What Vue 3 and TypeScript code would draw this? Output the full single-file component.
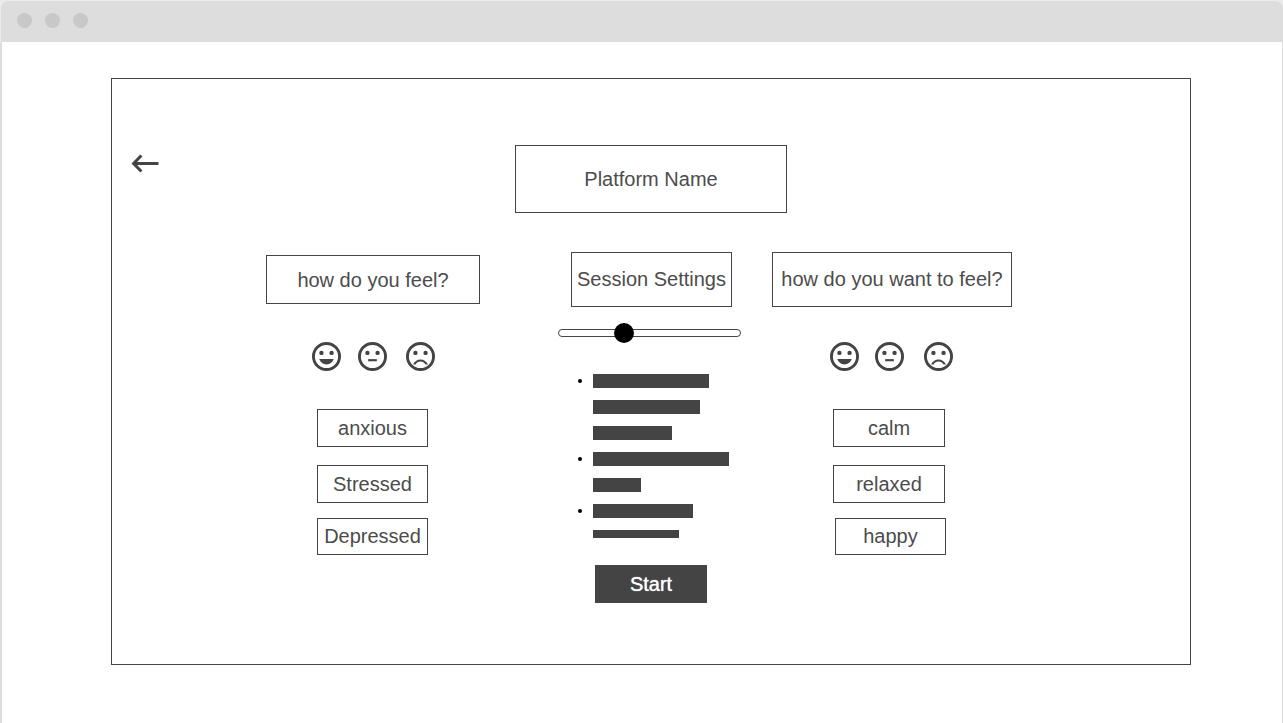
<script setup lang="ts">
import { ref } from 'vue'

type Mood = 'happy' | 'neutral' | 'sad'

interface FeelingGroup {
  id: string
  title: string
  feelings: string[]
}

const moods: Mood[] = ['happy', 'neutral', 'sad']
const mouths: Record<Mood, string> = {
  happy: 'M5 11.800h10c-.8 2.300-2.700 3.700-5 3.700s-4.200-1.400-5-3.700z',
  neutral: 'M7 11.800h6v1.500H7z',
  sad: 'M10 12c-2.330 0-4.320 1.450-5.120 3.500h1.670c.690-1.190 1.970-2 3.450-2s2.750.810 3.450 2h1.670c-.8-2.050-2.790-3.500-5.120-3.500z',
}

const current: FeelingGroup = {
  id: 'current',
  title: 'how do you feel?',
  feelings: ['anxious', 'Stressed', 'Depressed'],
}
const wanted: FeelingGroup = {
  id: 'wanted',
  title: 'how do you want to feel?',
  feelings: ['calm', 'relaxed', 'happy'],
}

const settings: number[][] = [
  [116, 107, 79],
  [136, 48],
  [100, 86],
]

const level = ref(55)
</script>

<template>
  <div class="window">
    <header class="chrome">
      <span class="dot"></span>
      <span class="dot"></span>
      <span class="dot"></span>
    </header>
    <main class="page">
      <div class="frame">
        <div class="top">
          <button class="back" type="button" aria-label="Back">
            <svg viewBox="0 0 28 21" width="28" height="21" aria-hidden="true">
              <path d="M10.400 2.500L2.600 10.500l7.800 8M2.600 10.500H27.500" fill="none" stroke="#444" stroke-width="3" />
            </svg>
          </button>
          <h1 class="box name">Platform Name</h1>
        </div>

        <div class="columns">
          <section class="column current">
            <h2 class="box heading">{{ current.title }}</h2>
            <div class="faces">
              <button v-for="mood in moods" :key="mood" class="face" :class="mood" type="button" :aria-label="mood">
                <svg viewBox="0 0 20 20" width="29" height="29" fill="#444" aria-hidden="true">
                  <circle cx="10" cy="10" r="9" fill="none" stroke="#444" stroke-width="2" />
                  <circle cx="6.500" cy="7.500" r="1.500" />
                  <circle cx="13.500" cy="7.500" r="1.500" />
                  <path :d="mouths[mood]" />
                </svg>
              </button>
            </div>
            <div class="feelings">
              <button v-for="item in current.feelings" :key="item" class="box feeling" type="button">{{ item }}</button>
            </div>
          </section>

          <section class="column session">
            <h2 class="box heading">Session Settings</h2>
            <input v-model.number="level" class="slider" type="range" min="0" max="160" aria-label="Session Settings" />
            <ul class="settings">
              <li v-for="(lines, i) in settings" :key="i">
                <span v-for="(width, j) in lines" :key="j" class="bar" :style="{ width: width + 'px' }"></span>
              </li>
            </ul>
            <button class="start" type="button">Start</button>
          </section>

          <section class="column wanted">
            <h2 class="box heading">{{ wanted.title }}</h2>
            <div class="faces">
              <button v-for="mood in moods" :key="mood" class="face" :class="mood" type="button" :aria-label="mood">
                <svg viewBox="0 0 20 20" width="29" height="29" fill="#444" aria-hidden="true">
                  <circle cx="10" cy="10" r="9" fill="none" stroke="#444" stroke-width="2" />
                  <circle cx="6.500" cy="7.500" r="1.500" />
                  <circle cx="13.500" cy="7.500" r="1.500" />
                  <path :d="mouths[mood]" />
                </svg>
              </button>
            </div>
            <div class="feelings">
              <button v-for="item in wanted.feelings" :key="item" class="box feeling" type="button">{{ item }}</button>
            </div>
          </section>
        </div>
      </div>
    </main>
  </div>
</template>

<style>
body {
  margin: 0;
  background: #ebebeb;
}
</style>

<style scoped>
.window {
  box-sizing: border-box;
  min-height: 100vh;
  padding-top: 1px;
  display: flex;
  flex-direction: column;
  font-family: 'Liberation Sans', Arial, sans-serif;
  font-size: 20px;
  line-height: 24px;
  color: #4c4c4c;
}

.window * {
  box-sizing: border-box;
}

.chrome {
  display: flex;
  align-items: center;
  gap: 13px;
  height: 41px;
  margin-left: 1px;
  padding: 0 16px 2px;
  background: #ddd;
  border-radius: 8px 8px 0 0;
}

.dot {
  width: 15px;
  height: 15px;
  border-radius: 50%;
  background: #c8c8c8;
}

.page {
  flex: 1;
  padding: 36px 91px 58px 109px;
  background: #fff;
  border: solid #ddd;
  border-width: 0 1px 0 2px;
}

.frame {
  border: 1px solid #444;
  padding: 66px 19px 61px;
}

.top {
  display: grid;
  grid-template-columns: 1fr 272px 1fr;
  align-items: start;
}

button {
  margin: 0;
  padding: 0;
  border: 0;
  background: none;
  color: inherit;
  font: inherit;
  cursor: pointer;
}

.back {
  justify-self: start;
  margin-top: 8px;
}

.back svg,
.face svg {
  display: block;
}

.box {
  display: flex;
  align-items: center;
  justify-content: center;
  margin: 0;
  border: 1px solid #444;
  font-size: 20px;
  font-weight: 400;
  white-space: nowrap;
}

.name {
  height: 68px;
}

.columns {
  display: flex;
  justify-content: center;
  align-items: flex-start;
  margin-top: 39px;
  padding-right: 24px;
}

.column {
  display: flex;
  flex-direction: column;
  align-items: flex-start;
}

.heading {
  width: 100%;
  height: 55px;
  padding-bottom: 1px;
}

.current {
  width: 214px;
  margin-right: 78px;
}

.current .heading {
  height: 49px;
  margin: 3px 0;
  padding-bottom: 0;
}

.session {
  width: 183px;
  margin-right: 31px;
}

.session .heading {
  width: 161px;
  margin-left: 13px;
}

.wanted {
  width: 240px;
}

.faces {
  display: flex;
  gap: 17px;
  margin: 35px 0 0 46px;
}

.wanted .faces {
  gap: 16px;
  margin-left: 58px;
}

.sad {
  margin-left: 2px;
}

.wanted .sad {
  margin-left: 4px;
}

.feelings {
  display: flex;
  flex-direction: column;
  margin: 38px 0 0 51px;
}

.wanted .feelings {
  margin-left: 61px;
}

.feeling {
  width: 111px;
  height: 38px;
  padding-bottom: 1px;
}

.wanted .feeling {
  width: 112px;
}

.feeling:nth-child(2) {
  margin-top: 18px;
  padding-bottom: 0;
}

.feeling:nth-child(3) {
  height: 37px;
  margin-top: 15px;
}

.wanted .feeling:nth-child(3) {
  width: 111px;
  margin-left: 2px;
}

.slider {
  appearance: none;
  width: 100%;
  height: 20px;
  margin: 16px 0 0;
  background: transparent;
}

.slider::-webkit-slider-runnable-track {
  box-sizing: border-box;
  height: 8px;
  border: 1px solid #444;
  border-radius: 4px;
}

.slider::-webkit-slider-thumb {
  appearance: none;
  width: 20px;
  height: 20px;
  margin-top: -7px;
  border-radius: 50%;
  background: #000;
}

.settings {
  display: flex;
  flex-direction: column;
  gap: 12px;
  margin: 31px 0 0 20px;
  padding: 0;
  list-style: none;
}

.settings li {
  display: flex;
  flex-direction: column;
  gap: 12px;
  position: relative;
  padding-left: 15px;
}

.settings li::before {
  content: '';
  position: absolute;
  left: 0;
  top: 5px;
  width: 4px;
  height: 4px;
  border-radius: 50%;
  background: #000;
}

.bar {
  height: 14px;
  background: #444;
}

.settings li:last-child .bar:last-child {
  height: 8px;
}

.start {
  width: 112px;
  height: 38px;
  margin: 27px 0 0 37px;
  background: #444;
  color: #fff;
  text-shadow: 0 0 1px #fff;
}
</style>
